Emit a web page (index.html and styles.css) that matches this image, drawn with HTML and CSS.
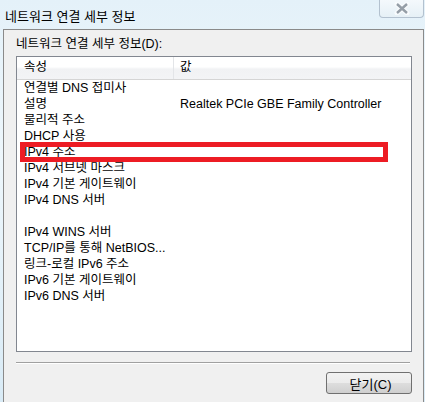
FILE: index.html
```html
<!DOCTYPE html>
<html lang="ko">
<head>
    <meta charset="UTF-8">
    <title>네트워크 연결 세부 정보</title>
    <link rel="stylesheet" href="styles.css">
</head>
<body>
    <div class="window">
        <div class="titlebar">
            <span class="title">네트워크 연결 세부 정보</span>
            <button class="close" aria-label="닫기">
                <svg width="16" height="13" viewBox="0 0 16 13">
                    <path d="M3 2 L13 11 M13 2 L3 11" stroke="#f8fbfd" stroke-width="5" stroke-linecap="round" fill="none"/>
                    <path d="M3 2 L13 11 M13 2 L3 11" stroke="#959ea7" stroke-width="2.4" fill="none"/>
                </svg>
            </button>
        </div>
        <div class="client">
            <div class="caption">네트워크 연결 세부 정보(D):</div>
            <div class="list">
                <div class="list-head">
                    <div class="col-name">속성</div>
                    <div class="col-value">값</div>
                </div>
                <div class="row"><div class="col-name">연결별 DNS 접미사</div><div class="col-value"></div></div>
                <div class="row"><div class="col-name">설명</div><div class="col-value">Realtek PCIe GBE Family Controller</div></div>
                <div class="row"><div class="col-name">물리적 주소</div><div class="col-value"></div></div>
                <div class="row"><div class="col-name">DHCP 사용</div><div class="col-value"></div></div>
                <div class="row"><div class="col-name">IPv4 주소</div><div class="col-value"></div></div>
                <div class="row"><div class="col-name">IPv4 서브넷 마스크</div><div class="col-value"></div></div>
                <div class="row"><div class="col-name">IPv4 기본 게이트웨이</div><div class="col-value"></div></div>
                <div class="row"><div class="col-name">IPv4 DNS 서버</div><div class="col-value"></div></div>
                <div class="row"><div class="col-name"></div><div class="col-value"></div></div>
                <div class="row"><div class="col-name">IPv4 WINS 서버</div><div class="col-value"></div></div>
                <div class="row"><div class="col-name">TCP/IP를 통해 NetBIOS...</div><div class="col-value"></div></div>
                <div class="row"><div class="col-name">링크-로컬 IPv6 주소</div><div class="col-value"></div></div>
                <div class="row"><div class="col-name">IPv6 기본 게이트웨이</div><div class="col-value"></div></div>
                <div class="row"><div class="col-name">IPv6 DNS 서버</div><div class="col-value"></div></div>
                <div class="highlight"></div>
            </div>
            <div class="separator"></div>
            <div class="actions">
                <button class="btn">닫기(C)</button>
            </div>
        </div>
    </div>
</body>
</html>
```

FILE: styles.css
```css
body {
    margin: 0;
    font-family: "Liberation Sans", "Noto Sans CJK KR", sans-serif;
    font-size: 12.5px;
    color: #000000;
}
.window {
    width: 425px;
    height: 402px;
    box-sizing: border-box;
    padding: 0 1px 0 3px;
    background: linear-gradient(to bottom, #e4f1f9 0%, #eef7fc 40%, #d9ebf6 100%);
    display: flex;
    flex-direction: column;
}
.titlebar {
    height: 29px;
    flex: none;
    display: flex;
    align-items: flex-start;
    justify-content: space-between;
}
.title {
    margin: 6px 0 0 2px;
    font-size: 13px;
    color: #000000;
}
.close {
    width: 45px;
    height: 18px;
    margin: 0;
    padding: 0;
    border: 1px solid #b3c1cf;
    border-top: none;
    border-radius: 0 0 4px 4px;
    background: linear-gradient(to bottom, #f4f9fc, #e6f0f6);
    display: flex;
    align-items: center;
    justify-content: center;
}
.client {
    flex: 1;
    background: #f0f0f0;
    border: 1px solid #8a8a8a;
    border-bottom: none;
    padding: 0 11px 0 12px;
    display: flex;
    flex-direction: column;
}
.caption {
    margin-top: 6px;
    height: 20px;
    line-height: 16px;
}
.list {
    position: relative;
    height: 296px;
    box-sizing: border-box;
    border: 1px solid #828790;
    background: #ffffff;
}
.list-head {
    display: flex;
    height: 22px;
    background: linear-gradient(to bottom, #ffffff 0%, #ffffff 45%, #f1f2f4 55%, #f3f4f6 100%);
    border-bottom: 1px solid #d5d5d5;
    line-height: 20px;
}
.list-head .col-name {
    border-right: 1px solid #e3e5e8;
}
.row {
    display: flex;
    height: 16px;
    line-height: 16px;
}
.col-name {
    width: 149px;
    padding-left: 7px;
    white-space: nowrap;
}
.col-value {
    flex: 1;
    padding-left: 6px;
    white-space: nowrap;
}
.row .col-value {
    padding-left: 7px;
}
.highlight {
    position: absolute;
    left: 3px;
    top: 85px;
    width: 368px;
    height: 20px;
    box-sizing: border-box;
    border: 5px solid #ed1c24;
}
.separator {
    margin-top: 10px;
    margin-right: 2px;
    height: 1px;
    background: #a0a0a0;
    border-bottom: 1px solid #ffffff;
}
.actions {
    display: flex;
    justify-content: flex-end;
    margin-top: 8px;
}
.btn {
    width: 86px;
    height: 22px;
    font-family: "Liberation Sans", "Noto Sans CJK KR", sans-serif;
    font-size: 13px;
    border: 1px solid #707070;
    border-radius: 3px;
    background: linear-gradient(to bottom, #f2f2f2 0%, #ebebeb 50%, #dddddd 51%, #cfcfcf 100%);
    padding: 0 0 0 3px;
}
```
